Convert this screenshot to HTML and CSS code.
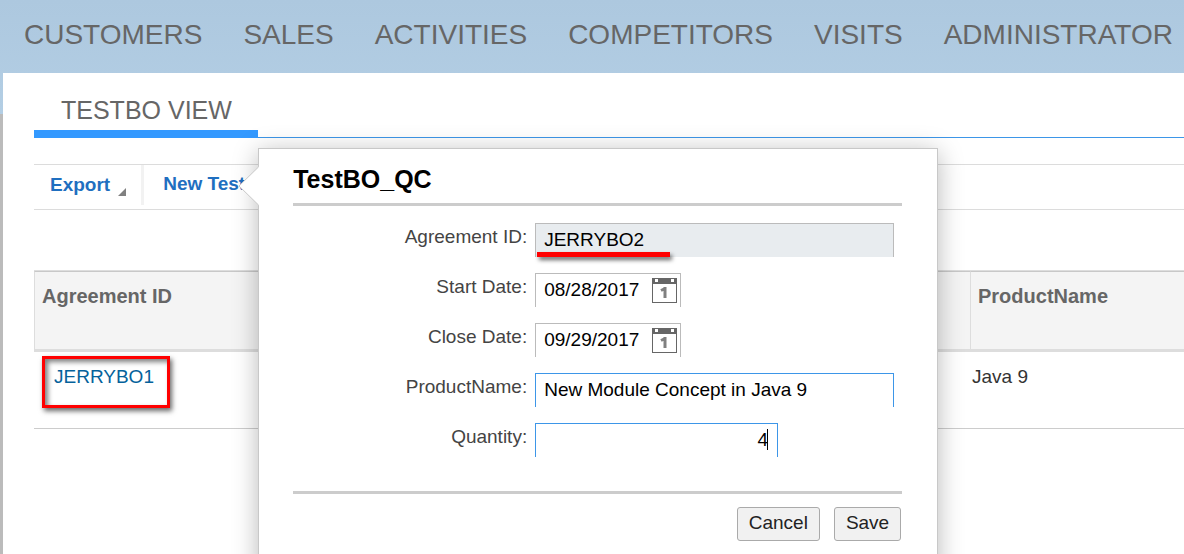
FILE: index.html
```html
<!DOCTYPE html>
<html lang="en">
<head>
    <meta charset="utf-8">
    <title>TestBO View</title>
    <link rel="stylesheet" href="styles.css">
</head>
<body>
    <nav class="main-nav">
        <a href="#">CUSTOMERS</a>
        <a href="#">SALES</a>
        <a href="#">ACTIVITIES</a>
        <a href="#">COMPETITORS</a>
        <a href="#">VISITS</a>
        <a href="#">ADMINISTRATOR</a>
    </nav>

    <main class="page">
        <div class="tabs">
            <a class="tab" href="#">TESTBO VIEW</a>
        </div>

        <div class="toolbar">
            <button class="tool export" type="button">Export
                <svg class="corner" width="8" height="8" viewBox="0 0 8 8"><path d="M8 0V8H0Z" fill="#808080"/></svg>
            </button>
            <div class="tool-group">
                <button class="tool" type="button">New Test</button>

                <!-- Quick create popup -->
                <form class="popup">
                    <svg class="popup-arrow" width="21" height="40" viewBox="0 0 21 40">
                        <path d="M21 0.5L1 20L21 39.5Z" fill="#fff"/>
                        <path d="M20.5 1L1 20L20.5 39" fill="none" stroke="#c8c8c8"/>
                    </svg>
                    <h2>TestBO_QC</h2>
                    <div class="fields">
                        <label for="agreement">Agreement ID:</label>
                        <div class="field wide marked"><input id="agreement" type="text" value="JERRYBO2" readonly></div>

                        <label for="start">Start Date:</label>
                        <div class="field date">
                            <input id="start" type="text" value="08/28/2017">
                            <button class="calendar" type="button" aria-label="Pick start date">
                                <svg width="25" height="25" viewBox="0 0 25 25">
                                    <path d="M0 0H25V25H0Z" fill="#666"/>
                                    <path d="M1 6H24V24H1Z" fill="#fff"/>
                                    <path d="M3 1H6V4H3ZM19 1H22V4H19Z" fill="#fff"/>
                                    <path d="M13 9V20M9 12.500L13 10.500" fill="none" stroke="#808080" stroke-width="3"/>
                                </svg>
                            </button>
                        </div>

                        <label for="close">Close Date:</label>
                        <div class="field date">
                            <input id="close" type="text" value="09/29/2017">
                            <button class="calendar" type="button" aria-label="Pick close date">
                                <svg width="25" height="25" viewBox="0 0 25 25">
                                    <path d="M0 0H25V25H0Z" fill="#666"/>
                                    <path d="M1 6H24V24H1Z" fill="#fff"/>
                                    <path d="M3 1H6V4H3ZM19 1H22V4H19Z" fill="#fff"/>
                                    <path d="M13 9V20M9 12.500L13 10.500" fill="none" stroke="#808080" stroke-width="3"/>
                                </svg>
                            </button>
                        </div>

                        <label for="product">ProductName:</label>
                        <div class="field wide active"><input id="product" type="text" value="New Module Concept in Java 9"></div>

                        <label for="quantity">Quantity:</label>
                        <div class="field number active"><input id="quantity" type="text" value="4"></div>
                    </div>
                    <div class="actions">
                        <button type="button">Cancel</button>
                        <button type="submit">Save</button>
                    </div>
                </form>
            </div>
        </div>

        <table class="grid">
            <thead>
                <tr><th>Agreement ID</th><th class="col-product">ProductName</th></tr>
            </thead>
            <tbody>
                <tr><td><a class="highlight" href="#">JERRYBO1</a></td><td>Java 9</td></tr>
            </tbody>
        </table>
    </main>
</body>
</html>
```
FILE: styles.css
```css
* { box-sizing: border-box; }
body { margin: 0; min-height: 100vh; overflow: hidden; font-family: "Liberation Sans", Arial, sans-serif; font-size: 19px; color: #333; background: linear-gradient(#adc8df, #b3cee4 114px, #bbb 114px); }
a { text-decoration: none; }
button, input { font: inherit; }

.main-nav { display: flex; gap: 41px; height: 73px; padding: 19px 0 0 24px; font-size: 28px; line-height: 32px; }
.main-nav a { color: #666; }

.page { min-height: calc(100vh - 73px); margin-left: 3px; padding-left: 31px; background: #fff; }
.tabs { display: flex; height: 65px; border-bottom: 1px solid #3d96e8; }
.tab { height: 65px; padding: 23px 26px 0 27px; border-bottom: 8px solid #39f; font-size: 25px; line-height: 28px; color: #666; }

.toolbar { display: flex; height: 46px; margin-top: 26px; border-top: 1px solid #dcdcdc; border-bottom: 1px solid #dcdcdc; }
.tool { display: flex; height: 38px; padding: 0; border: 0; background: none; font-weight: bold; color: #1f6fc0; white-space: nowrap; }
.tool { align-items: center; }
.export { gap: 8px; height: 40px; padding: 0 15px 0 16px; border-right: 3px solid #f2f2f2; }
.corner { align-self: flex-end; margin-bottom: 9px; }
.tool-group { position: relative; padding-left: 19px; }

.popup { position: absolute; z-index: 1; top: -17px; left: 114px; width: 680px; padding: 15px 35px 34px 34px; background: #fff; border: 1px solid #c8c8c8; box-shadow: 0 4px 24px rgba(0,0,0,0.28); }
.popup-arrow { position: absolute; top: 17px; left: -21px; }
.popup h2 { margin: 0; padding-bottom: 8px; border-bottom: 3px solid #ccc; font-size: 25px; line-height: 31px; color: #000; }
.fields { display: grid; grid-template-columns: 234px 1fr; gap: 16px 8px; padding: 17px 0 34px; border-bottom: 3px solid #ccc; }
.fields label { padding-top: 2px; line-height: 24px; text-align: right; color: #444; }
.field { position: relative; display: flex; height: 34px; border: 1px solid #bbb; border-bottom: 0; background: #fff; }
.field input { flex: 1; min-width: 0; height: 32px; padding: 0 8px; border: 0; outline: 0; background: none; color: #000; }
.active { border-color: #3d96e8; }
.wide { width: 359px; }
.date { width: 146px; }
.number { width: 243px; }
.number input { padding-right: 9px; text-align: right; }
/* text cursor */
.number::after { content: ""; position: absolute; top: 5px; right: 9px; width: 1px; height: 21px; background: #000; }
.marked { background: #e8ecef; }
.marked::after { content: ""; position: absolute; top: 28px; left: 1px; width: 133px; height: 5px; background: red; box-shadow: 2px 3px 4px rgba(0,0,0,0.6); }
.calendar { width: 25px; height: 25px; margin: 4px 3px 0 0; padding: 0; border: 0; background: none; }
.calendar svg { display: block; }
.actions { display: flex; justify-content: flex-end; gap: 14px; padding: 13px 1px 0 0; }
.actions button { height: 34px; padding: 0 11px 2px; border: 1px solid #aaa; border-radius: 3px; background: #f1f1f1; color: #222; }

.grid { width: 100%; margin-top: 60px; border-collapse: separate; border-spacing: 0; border-top: 1px solid #ddd; line-height: 22px; }
.grid th { height: 81px; padding: 13px 7px 0; vertical-align: top; text-align: left; font-size: 20px; color: #666; background: #f4f4f4; border-top: 1px solid #c8c8c8; border-left: 1px solid #ddd; border-bottom: 3px solid #ddd; }
.grid .col-product { width: 214px; }
.grid td { height: 77px; padding: 14px 2px 0; vertical-align: top; border-bottom: 1px solid #ccc; }
.grid td:first-child { padding: 4px 8px 0; }
.highlight { display: inline-block; width: 128px; height: 52px; padding: 7px 9px; border: 3px solid red; box-shadow: 2px 3px 5px rgba(0,0,0,0.6), inset 3px 3px 5px rgba(0,0,0,0.5); color: #05629b; }
```
